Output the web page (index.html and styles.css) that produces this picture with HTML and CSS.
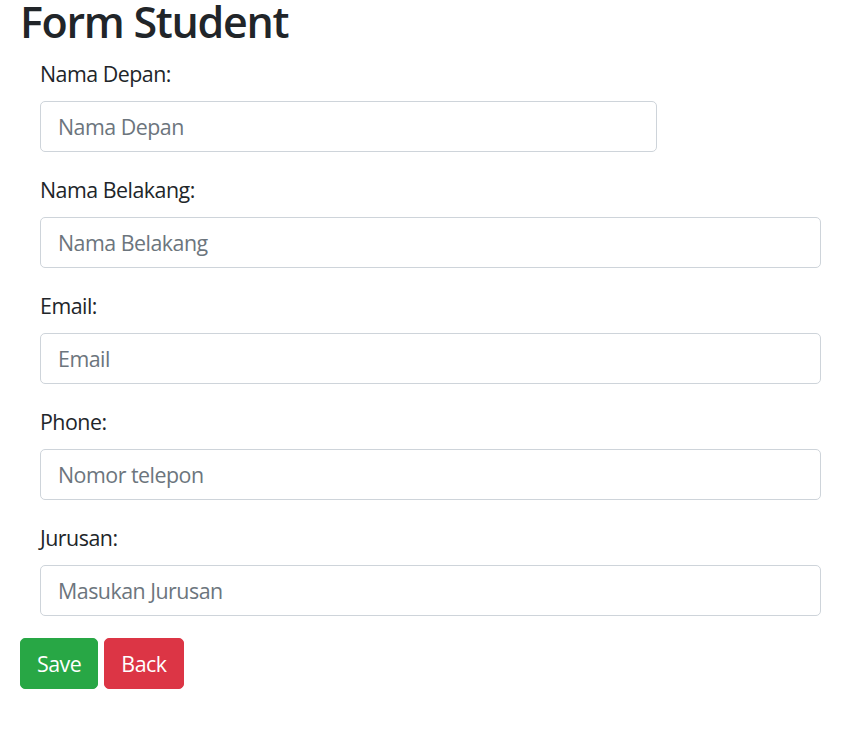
FILE: index.html
```html
<!DOCTYPE html>
<html lang="id">
<head>
<meta charset="utf-8">
<title>Form Student</title>
<link rel="stylesheet" href="styles.css">
</head>
<body>
<div class="page">
  <h1 class="title">Form Student</h1>
  <form class="form">
    <div class="field field-short">
      <label class="label" for="depan">Nama Depan:</label>
      <input class="input" id="depan" type="text" placeholder="Nama Depan">
    </div>
    <div class="field">
      <label class="label" for="belakang">Nama Belakang:</label>
      <input class="input" id="belakang" type="text" placeholder="Nama Belakang">
    </div>
    <div class="field">
      <label class="label" for="email">Email:</label>
      <input class="input" id="email" type="text" placeholder="Email">
    </div>
    <div class="field">
      <label class="label" for="phone">Phone:</label>
      <input class="input" id="phone" type="text" placeholder="Nomor telepon">
    </div>
    <div class="field">
      <label class="label" for="jurusan">Jurusan:</label>
      <input class="input" id="jurusan" type="text" placeholder="Masukan Jurusan">
    </div>
    <div class="actions">
      <button class="btn btn-save" type="button">Save</button>
      <button class="btn btn-back" type="button">Back</button>
    </div>
  </form>
</div>
</body>
</html>
```
FILE: styles.css
```css
* { box-sizing: border-box; }
html, body { margin: 0; padding: 0; background: #fff; }
body {
  font-family: "Open Sans", "Noto Sans", sans-serif;
  color: #212529;
  font-size: 21.4px;
  line-height: 32px;
  letter-spacing: -0.5px;
}
.page { padding: 0 20px; }
.title {
  margin: 0 0 14px 0;
  font-size: 43px;
  line-height: 44px;
  font-weight: 600;
  letter-spacing: -1.3px;
  color: #212529;
}
.form { margin: 0; }
.field {
  display: flex;
  flex-direction: column;
  margin: 0 24px 22px 20px;
}
.field-short .input { width: 617px; }
.label {
  display: block;
  margin-bottom: 11px;
  line-height: 32px;
}
.input {
  display: block;
  width: 100%;
  height: 51px;
  padding: 8px 17px;
  font: inherit;
  letter-spacing: -0.5px;
  line-height: 32px;
  color: #495057;
  background: #fff;
  border: 1px solid #ced4da;
  border-radius: 5px;
  outline: none;
}
.input::placeholder { color: #6c757d; opacity: 1; }
.actions {
  display: flex;
  gap: 6px;
}
.btn {
  height: 51px;
  padding: 8px 16px;
  font: inherit;
  letter-spacing: -0.5px;
  line-height: 32px;
  color: #fff;
  border: 1px solid transparent;
  border-radius: 5px;
  cursor: pointer;
}
.btn-save { background: #28a745; border-color: #28a745; }
.btn-back { background: #dc3545; border-color: #dc3545; }
```
